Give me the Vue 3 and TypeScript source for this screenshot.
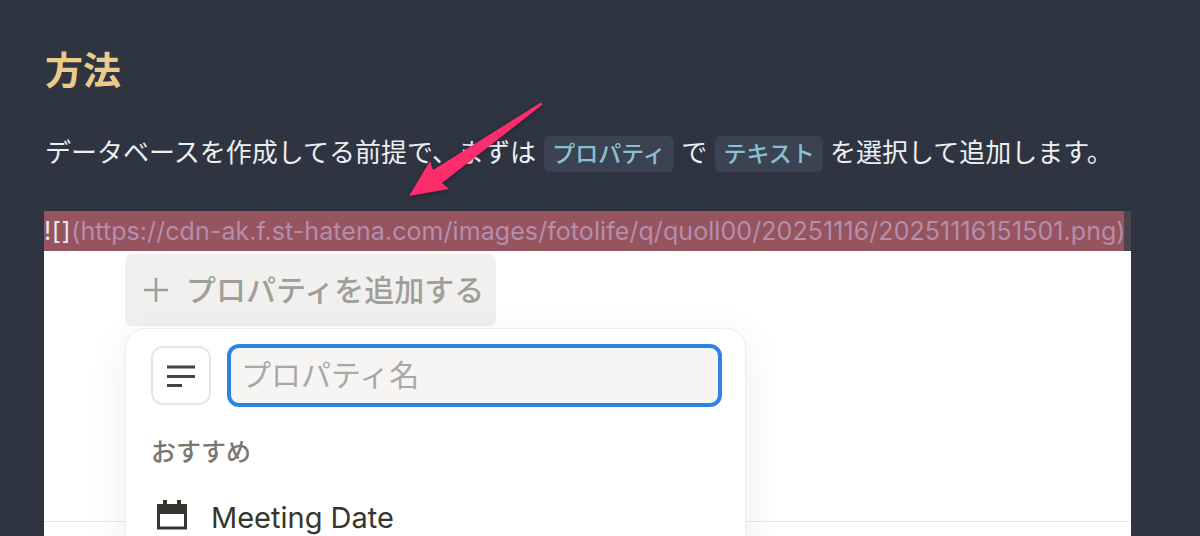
<script setup lang="ts">
const url = '(https://cdn-ak.f.st-hatena.com/images/fotolife/q/quoll00/20251116/20251116151501.png)'
</script>

<template>
  <main class="page">
    <h2 class="title">方法</h2>
    <p class="para">データベースを作成してる前提で、まずは <code class="tag">プロパティ</code> で <code class="tag">テキスト</code> を選択して追加します。</p>
    <div class="mdline"><span class="mark"><span class="bang">![]</span><span class="url">{{ url }}</span></span></div>
    <section class="shot">
      <div class="rule"></div>
      <div class="add">
        <svg width="24" height="24" viewBox="0 0 24 24"><path d="M0 12h24M12 0v24" stroke="#a09e99" stroke-width="2.6" fill="none" /></svg>
        <span>プロパティを追加する</span>
      </div>
      <div class="pop">
        <div class="top">
          <div class="typebtn">
            <svg width="28" height="22" viewBox="0 0 28 22"><path d="M0 2h28M0 11.500h28M0 20.500h15" stroke="#444441" stroke-width="3" fill="none" /></svg>
          </div>
          <div class="field">プロパティ名</div>
        </div>
        <div class="label">おすすめ</div>
        <div class="item">
          <svg class="cal" width="32" height="30" viewBox="0 0 32 30"><path fill="#37352f" fill-rule="evenodd" d="M1 4h6V0h4v4h10V0h4v4h6v25.500H1zM4 14v12.500h24V14z" /></svg>
          <span>Meeting Date</span>
        </div>
      </div>
    </section>
    <svg class="arrow" width="150" height="100" viewBox="400 100 150 100">
      <path d="M409 196L430 161L433 170L540 103A1.500 1.500 0 0 1 542 105L442 183L449 189Z" fill="#fd2c6c" />
    </svg>
  </main>
</template>

<style>
html, body { margin: 0; background: #2e3440; }
</style>

<style scoped>
.page {
  position: relative;
  box-sizing: border-box;
  width: 1200px;
  height: 536px;
  overflow: hidden;
  padding: 46px 69px 0 44px;
  background: #2e3440;
  font-family: Inter, "Noto Sans CJK JP", sans-serif;
}
.title {
  margin: 0 0 0 1px;
  height: 48px;
  font-size: 38px;
  line-height: 48px;
  font-weight: 700;
  color: #ebcb8b;
}
.para {
  margin: 39px 0 0 1px;
  height: 40px;
  white-space: nowrap;
  font-size: 26px;
  line-height: 40px;
  color: #eceff4;
}
.tag {
  margin-left: 1px;
  padding: 4px 8px;
  border-radius: 6px;
  background: #3b4252;
  color: #88c0d0;
  font-family: inherit;
  font-size: 23px;
  font-weight: 500;
}
.mdline {
  margin-top: 38px;
  height: 40px;
  background: #4b4350;
  line-height: 40px;
  white-space: nowrap;
}
.mark {
  display: inline-block;
  height: 40px;
  width: 1080px;
  background: #96545e;
  font-size: 25px;
}
.bang { color: #e5e9f0; letter-spacing: 0.6px; }
.url { color: #b48ead; letter-spacing: 0.07px; }
.shot {
  position: relative;
  box-sizing: border-box;
  height: 285px;
  padding: 3px 0 0 81px;
  background: #fff;
}
.rule {
  position: absolute;
  left: 0;
  right: 0;
  top: 270px;
  height: 1px;
  background: #e9e9e7;
}
.add {
  display: flex;
  align-items: center;
  gap: 18px;
  box-sizing: border-box;
  width: 371px;
  height: 72px;
  padding-left: 19px;
  border-radius: 7px;
  background: #f1f0ee;
  color: #a09e99;
  font-size: 30px;
  font-weight: 500;
  line-height: 70px;
}
.pop {
  position: relative;
  box-sizing: border-box;
  width: 621px;
  height: 240px;
  margin-top: 2px;
  padding: 15px 23px 0 25px;
  border: 1px solid #ececea;
  border-radius: 20px;
  background: #fff;
  box-shadow: 0 8px 40px rgba(15, 15, 15, 0.07);
}
.top { display: flex; gap: 16px; align-items: center; }
.typebtn {
  display: flex;
  align-items: center;
  justify-content: center;
  box-sizing: border-box;
  width: 60px;
  height: 59px;
  border: 2px solid #e6e6e4;
  border-radius: 12px;
}
.field {
  flex: 1;
  box-sizing: border-box;
  height: 63px;
  padding-left: 10px;
  border: 4px solid #2b83e2;
  border-radius: 12px;
  background: #f6f5f4;
  color: #aaa8a4;
  font-size: 30px;
  line-height: 54px;
}
.label {
  margin-top: 27px;
  color: #787670;
  font-size: 25px;
  font-weight: 500;
  line-height: 36px;
}
.item {
  display: flex;
  align-items: center;
  gap: 23px;
  margin: 30px 0 0 5px;
  color: #37352f;
  font-size: 29px;
  line-height: 36px;
}
.cal { align-self: flex-start; }
.arrow {
  position: absolute;
  left: 400px;
  top: 100px;
  filter: drop-shadow(0 1px 2px rgba(0, 0, 0, 0.35));
}
</style>
